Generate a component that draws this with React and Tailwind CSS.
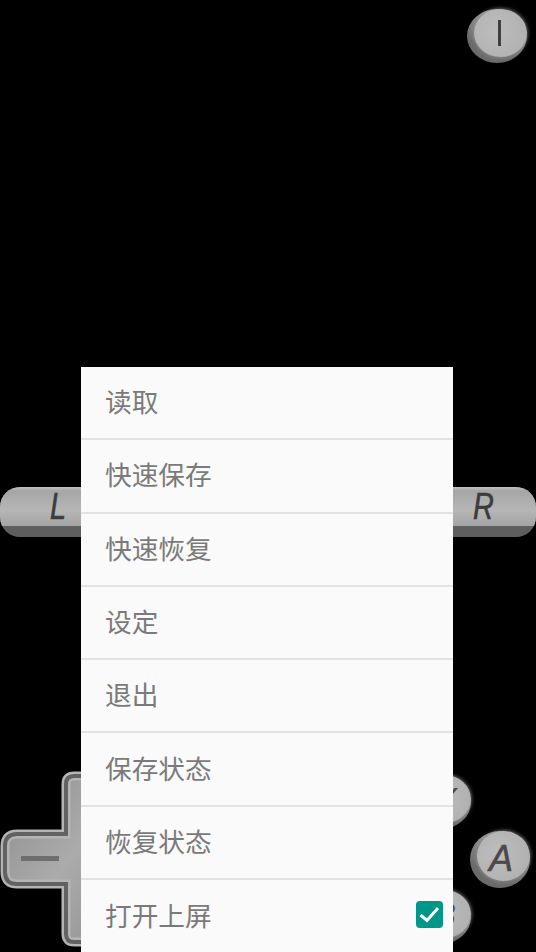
const items = ["读取", "快速保存", "快速恢复", "设定", "退出", "保存状态", "恢复状态"];

function Round({ className, letter, textClass, size = "h-[54px]", face = "h-[48px]" }) {
  return (
    <div className={`absolute flex w-[60px] items-start justify-end rounded-[50%] bg-[linear-gradient(200deg,#a8a8a8,#6a6a6a_70%)] ${size} ${className}`}>
      <div className={`flex w-[53px] items-center justify-center rounded-[50%] bg-[radial-gradient(circle_at_40%_45%,#bdbdbd_0%,#b2b2b2_70%,#a4a4a4_100%)] shadow-[0_0_4px_#9a9a9a] ${face}`}>
        {letter === "I" ? (
          <span className="mr-[3px] h-[26px] w-[3px] bg-[#3f3f3f]" />
        ) : (
          <span className={`font-['Liberation_Sans',sans-serif] text-[#4a4a4a] ${textClass}`}>{letter}</span>
        )}
      </div>
    </div>
  );
}

function Pill({ className, letter, textClass }) {
  return (
    <div className={`h-[50px] overflow-hidden bg-[#5e5e5e] ${className}`}>
      <div className="flex h-[39px] items-center justify-center bg-[linear-gradient(180deg,#c2c2c2,#a6a6a6_10%,#b6b6b6_60%,#a4a4a4)]">
        <span className={`scale-x-80 font-['Liberation_Sans',sans-serif] text-[36px] italic text-[#3c3c3c] [-webkit-text-stroke:0.6px_#3c3c3c] ${textClass}`}>{letter}</span>
      </div>
    </div>
  );
}

function Dpad() {
  const d = "M74 776 H128 V834 H132 V884 H128 V942 H74 Q66 942 66 934 V884 H17 Q5 884 5 872 V846 Q5 834 17 834 H66 V784 Q66 776 74 776 Z";
  return (
    <svg className="absolute left-0 top-[760px]" width="132" height="192" viewBox="0 760 132 192">
      <defs>
        <linearGradient id="pad" x1="0" y1="0" x2="1" y2="1">
          <stop offset="0" stopColor="#8c8c8c" />
          <stop offset="0.5" stopColor="#ababab" />
          <stop offset="1" stopColor="#8f8f8f" />
        </linearGradient>
      </defs>
      <path d={d} fill="url(#pad)" stroke="#b4b4b4" strokeWidth="9" />
      <path d={d} fill="none" stroke="#626262" strokeWidth="4" />
      <rect x="21" y="856" width="38" height="5" fill="#6e6e6e" />
    </svg>
  );
}

export default function App() {
  return (
    <div className="relative h-[952px] w-[536px] overflow-hidden bg-black">
      <Round className="left-[467px] top-[9px]" letter="I" />
      <div className="absolute inset-x-0 top-[487px] flex justify-between">
        <Pill className="w-[100px] rounded-l-[20px]" letter="L" textClass="pl-[20px]" />
        <Pill className="w-[110px] rounded-r-[20px]" letter="R" textClass="pl-[6px]" />
      </div>
      <Dpad />
      <Round className="left-[411px] top-[775px]" letter="Y" textClass="text-[34px] italic" />
      <Round className="left-[411px] top-[890px]" letter="B" textClass="text-[34px] italic" />
      <Round className="left-[470px] top-[831px]" size="h-[57px]" face="h-[50px]" letter="A" textClass="pr-[5px] pt-[6px] text-[36px] italic [-webkit-text-stroke:0.5px_#4a4a4a]" />

      <div className="absolute left-[81px] top-[367px] w-[372px] bg-[#fafafa] font-['Noto_Sans_CJK_SC',sans-serif] text-[26.7px] text-[#7a7a7a]">
        {items.map((t) => (
          <div key={t} className="flex h-[73.3px] items-center border-b-2 border-[#e2e2e2] pb-[3px] pl-[24px]">
            {t}
          </div>
        ))}
        <div className="flex h-[72px] items-center justify-between pb-[3px] pl-[24px] pr-[10px]">
          <span>打开上屏</span>
          <div className="flex h-[27px] w-[27px] items-center justify-center rounded-[4px] bg-[#009688]">
            <svg width="21" height="17" viewBox="0 0 21 17" fill="none">
              <path d="M1.5 9 L8 14.5 L19 2" stroke="#ffffff" strokeWidth="3" />
            </svg>
          </div>
        </div>
      </div>
    </div>
  );
}
